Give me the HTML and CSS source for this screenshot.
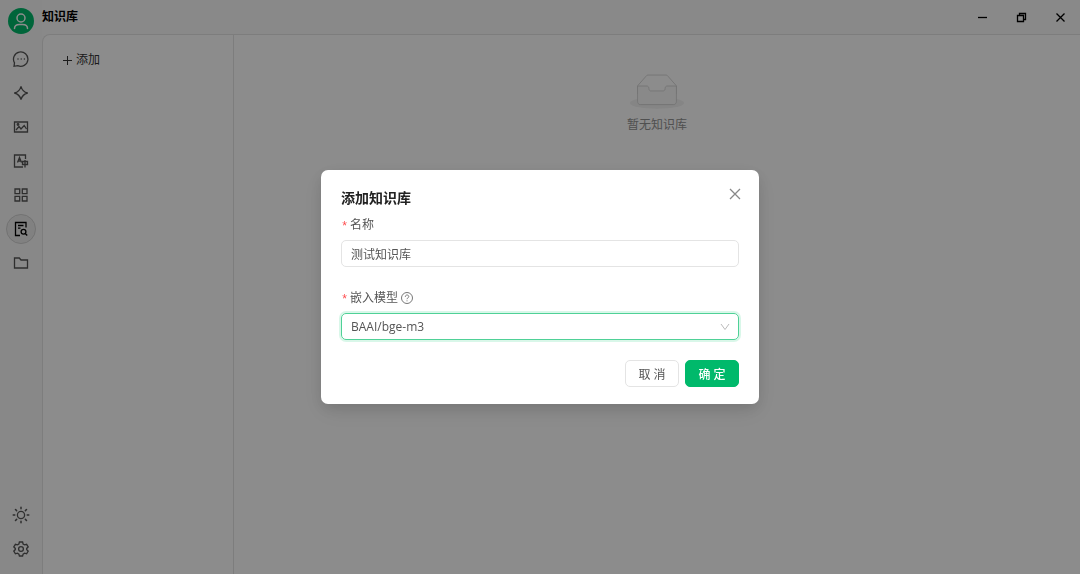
FILE: index.html
```html
<!DOCTYPE html>
<html lang="zh-CN">

<head>
    <meta charset="UTF-8" />
    <meta name="viewport" content="width=device-width, initial-scale=1.0" />
    <title>知识库</title>
    <link rel="stylesheet" href="styles.css">
</head>

<body>
    <div class="app">
        <aside class="sidebar">
            <button class="avatar" aria-label="用户">
                <svg width="26" height="26" viewBox="0 0 26 26">
                    <circle cx="13" cy="10" r="4" />
                    <path d="M6.500 20.500c0-3.300 2.200-4 5-4h3c2.800 0 5 .7 5 4" />
                </svg>
            </button>

            <nav class="menu">
                <a href="#" class="menu-item" aria-label="聊天">
                    <svg width="18" height="18" viewBox="0 0 18 18">
                        <path d="M2 16.300l.5-3.500A7.200 7.200 0 1 1 5.700 15.700z" />
                        <path class="dots" d="M6 9h.010M9.200 9h.010M12.400 9h.010" />
                    </svg>
                </a>
                <a href="#" class="menu-item" aria-label="智能体">
                    <svg width="18" height="18" viewBox="0 0 18 18">
                        <path d="M9 2.300Q10.300 7.700 15.700 9 10.300 10.300 9 15.700 7.700 10.300 2.300 9 7.700 7.700 9 2.300z" />
                    </svg>
                </a>
                <a href="#" class="menu-item" aria-label="绘画">
                    <svg width="18" height="18" viewBox="0 0 18 18">
                        <path d="M2.500 4h13v10h-13z" />
                        <path d="M4 12l3-3.500 2 2.500 3.200-3.500L14.500 11" />
                        <circle cx="6" cy="6.500" r=".8" />
                    </svg>
                </a>
                <a href="#" class="menu-item" aria-label="翻译">
                    <svg width="18" height="18" viewBox="0 0 18 18">
                        <path d="M13.500 7V3h-11v12H11" />
                        <path d="M5.500 10.500L7.500 5.500l2 5M6.200 9h2.600M10.500 9.500h5v3h-5zM13 8v7.500" />
                    </svg>
                </a>
                <a href="#" class="menu-item" aria-label="小程序">
                    <svg width="18" height="18" viewBox="0 0 18 18">
                        <path d="M3 3h4.700v4.700H3zM10.300 3H15v4.700h-4.700zM3 10.300h4.700V15H3zM10.300 10.300H15V15h-4.700z" />
                    </svg>
                </a>
                <a href="#" class="menu-item active" aria-label="知识库">
                    <svg width="18" height="18" viewBox="0 0 18 18">
                        <path d="M14 7.500V2.500H3.500v13H8" />
                        <path d="M6 5.500h5.500M6 8.200h2.500" />
                        <circle cx="11.500" cy="11.800" r="2.400" />
                        <path d="M13.200 13.500l2 2" />
                    </svg>
                </a>
                <a href="#" class="menu-item" aria-label="文件">
                    <svg width="18" height="18" viewBox="0 0 18 18">
                        <path d="M2.500 4h4.800l1.700 2h6.500v8h-13z" />
                    </svg>
                </a>
            </nav>

            <div class="menu menu-bottom">
                <button class="menu-item" aria-label="主题">
                    <svg width="18" height="18" viewBox="0 0 18 18">
                        <circle cx="9" cy="9" r="3.600" />
                        <path class="rays" d="M9 1.200v1.600M9 15.200v1.600M1.200 9h1.600M15.200 9h1.600M3.500 3.500l1.100 1.100M13.400 13.400l1.100 1.100M3.500 14.500l1.100-1.100M13.400 4.600l1.100-1.100" />
                    </svg>
                </button>
                <button class="menu-item" aria-label="设置">
                    <svg width="18" height="18" viewBox="0 0 18 18">
                        <path d="M7.400 2h3.200l.5 2 1.500.9 2-.6L16.200 7l-1.500 1.400v1.300l1.500 1.400-1.600 2.700-2-.6-1.500.9-.5 1.900H7.400l-.5-1.900-1.500-.9-2 .6L1.800 11l1.500-1.400V8.400L1.800 7l1.600-2.700 2 .6L6.900 4z" />
                        <circle cx="9" cy="9" r="2.400" />
                    </svg>
                </button>
            </div>
        </aside>

        <div class="page">
            <header class="titlebar">
                <h1>知识库</h1>
                <div class="window-controls">
                    <button aria-label="最小化">
                        <svg width="11" height="11" viewBox="0 0 11 11"><path d="M1 5.500h9" /></svg>
                    </button>
                    <button aria-label="还原">
                        <svg width="11" height="11" viewBox="0 0 11 11"><path d="M1.500 3.500h6v6h-6zM3.500 3.500v-2h6v6h-2" /></svg>
                    </button>
                    <button aria-label="关闭">
                        <svg width="11" height="11" viewBox="0 0 11 11"><path d="M1.500 1.500l8 8M9.500 1.500l-8 8" /></svg>
                    </button>
                </div>
            </header>

            <div class="content">
                <section class="list">
                    <button class="add-btn">
                        <svg width="11" height="11" viewBox="0 0 11 11"><path d="M5.500 1v9M1 5.500h9" /></svg>
                        添加
                    </button>
                </section>

                <main class="empty">
                    <svg width="54" height="35" viewBox="0 0 64 41">
                        <g transform="translate(0 1)">
                            <ellipse class="empty-shadow" cx="32" cy="33" rx="32" ry="7" />
                            <path d="M55 12.760L44.854 1.258C44.367.474 43.656 0 42.907 0H21.093c-.749 0-1.460.474-1.947 1.257L9 12.761V22h46v-9.240z" />
                            <path class="empty-box" d="M41.613 15.931c0-1.605.994-2.930 2.227-2.931H55v18.137C55 33.260 53.680 35 52.050 35h-40.100C10.320 35 9 33.259 9 31.137V13h11.160c1.233 0 2.227 1.323 2.227 2.928v.022c0 1.605 1.005 2.901 2.237 2.901h14.752c1.232 0 2.237-1.308 2.237-2.913v-.007z" />
                        </g>
                    </svg>
                    <p>暂无知识库</p>
                </main>
            </div>
        </div>
    </div>

    <!-- Add knowledge base dialog -->
    <div class="mask">
        <form class="modal" role="dialog" aria-labelledby="modalTitle">
            <button type="button" class="close-btn" aria-label="关闭">
                <svg width="12" height="12" viewBox="0 0 12 12"><path d="M1 1l10 10M11 1L1 11" /></svg>
            </button>
            <h2 id="modalTitle">添加知识库</h2>

            <div class="field">
                <label for="name"><span class="required">*</span>名称</label>
                <input type="text" id="name" value="测试知识库" />
            </div>

            <div class="field">
                <label for="model"><span class="required">*</span>嵌入模型
                    <svg class="help" width="12" height="12" viewBox="0 0 12 12">
                        <circle cx="6" cy="6" r="5.500" />
                        <path d="M4.300 4.800c0-2.400 3.500-2.300 3.500-.2 0 1.300-1.800 1.200-1.800 2.600M6 8.400v.9" />
                    </svg>
                </label>
                <div class="select focused">
                    <select id="model">
                        <option>BAAI/bge-m3</option>
                    </select>
                    <svg width="10" height="10" viewBox="0 0 10 10"><path d="M1 2l4 5.500L9 2" /></svg>
                </div>
            </div>

            <div class="actions">
                <button type="button" class="btn">取 消</button>
                <button type="button" class="btn btn-primary">确 定</button>
            </div>
        </form>
    </div>
</body>

</html>
```

FILE: styles.css
```css
* {
    margin: 0;
    padding: 0;
    box-sizing: border-box;
}

body {
    background-color: #fafafa;
    font-family: "Open Sans", "Noto Sans CJK SC", sans-serif;
    font-size: 12px;
    line-height: 20px;
    color: #333;
}

button,
input,
select {
    font: inherit;
    color: inherit;
    background: none;
    border: none;
}

button {
    cursor: pointer;
}

svg {
    display: block;
    fill: none;
    stroke: currentColor;
}

.app {
    display: flex;
    height: 100vh;
}

/* Sidebar */
.sidebar {
    width: 42px;
    display: flex;
    flex-direction: column;
    align-items: center;
    padding: 8px 0 10px;
    background-color: #f8f8f8;
}

.avatar {
    width: 26px;
    height: 26px;
    border-radius: 50%;
    background-color: #00b96b;
    color: #fff;
}

.avatar svg {
    stroke-width: 1.5;
    stroke-linecap: round;
}

.menu {
    display: flex;
    flex-direction: column;
    gap: 4px;
    margin-top: 10px;
}

.menu-bottom {
    margin-top: auto;
}

.menu-item {
    width: 30px;
    height: 30px;
    display: flex;
    align-items: center;
    justify-content: center;
    border: 1px solid transparent;
    border-radius: 50%;
    color: #555;
}

.menu-item svg {
    stroke-width: 1.3;
}

.menu-item .dots,
.menu-item .rays {
    stroke-width: 1.5;
    stroke-linecap: round;
}

.menu-item.active {
    color: #000;
    background-color: #ececec;
    border-color: #d0d0d0;
}

/* Page */
.page {
    flex: 1;
    display: flex;
    flex-direction: column;
}

.titlebar {
    height: 34px;
    display: flex;
    align-items: center;
    justify-content: space-between;
}

.titlebar h1 {
    font-size: 12px;
    font-weight: 700;
    color: #000;
}

.window-controls {
    display: flex;
}

.window-controls button {
    width: 39px;
    height: 34px;
    display: flex;
    align-items: center;
    justify-content: center;
    color: #000;
}

.window-controls svg {
    stroke-width: 1.3;
}

.content {
    flex: 1;
    display: flex;
    background-color: #fff;
    border-top: 1px solid #e4e4e4;
    border-left: 1px solid #e4e4e4;
    border-top-left-radius: 8px;
}

.list {
    width: 191px;
    padding: 15px 19px;
    border-right: 1px solid #e4e4e4;
}

.add-btn {
    display: flex;
    align-items: center;
    gap: 3px;
}

.empty {
    flex: 1;
    display: flex;
    flex-direction: column;
    align-items: center;
    gap: 6px;
    padding-top: 39px;
    color: #929292;
}

.empty svg {
    stroke: #d0d0d0;
}

.empty-shadow {
    fill: #f2f2f2;
    stroke: none;
}

.empty-box {
    fill: #fafafa;
}

/* Dialog */
.mask {
    position: fixed;
    inset: 0;
    display: flex;
    align-items: center;
    justify-content: center;
    background-color: rgba(0, 0, 0, 0.45);
}

.modal {
    position: relative;
    width: 100%;
    max-width: 438px;
    padding: 17px 20px;
    background-color: #fff;
    border-radius: 7px;
    box-shadow: 0 5px 14px rgba(0, 0, 0, 0.1), 0 8px 24px rgba(0, 0, 0, 0.08);
    color: #555;
}

.modal h2 {
    font-size: 14px;
    line-height: 22px;
    font-weight: 700;
    color: #222;
    margin-bottom: 5px;
}

.close-btn {
    position: absolute;
    top: 12px;
    right: 12px;
    padding: 6px;
    color: #888;
}

.close-btn svg {
    stroke-width: 1.3;
}

.field {
    display: flex;
    flex-direction: column;
    gap: 5px;
    margin-bottom: 20px;
}

.field label {
    display: flex;
    align-items: center;
    padding-top: 1px;
}

.required {
    width: 9px;
    padding-top: 4px;
    font-family: "Liberation Mono", monospace;
    line-height: 16px;
    color: #ff4d4f;
}

.help {
    margin-left: 3px;
    color: #777;
}

.field input,
.field select {
    width: 100%;
    height: 27px;
    padding: 0 9px;
    border: 1px solid #e4e4e4;
    border-radius: 5px;
    outline: none;
    appearance: none;
}

.select {
    position: relative;
}

.select svg {
    position: absolute;
    top: 9px;
    right: 9px;
    color: #bbb;
    pointer-events: none;
}

.select.focused select {
    border-color: #4fd197;
    box-shadow: 0 0 0 2px rgba(0, 200, 110, 0.15);
}

.actions {
    display: flex;
    justify-content: flex-end;
    gap: 6px;
}

.btn {
    width: 54px;
    height: 27px;
    padding-top: 2px;
    border: 1px solid #e4e4e4;
    border-radius: 5px;
}

.btn-primary {
    background-color: #00b96b;
    border-color: #00b96b;
    color: #fff;
    font-weight: 500;
}
```
